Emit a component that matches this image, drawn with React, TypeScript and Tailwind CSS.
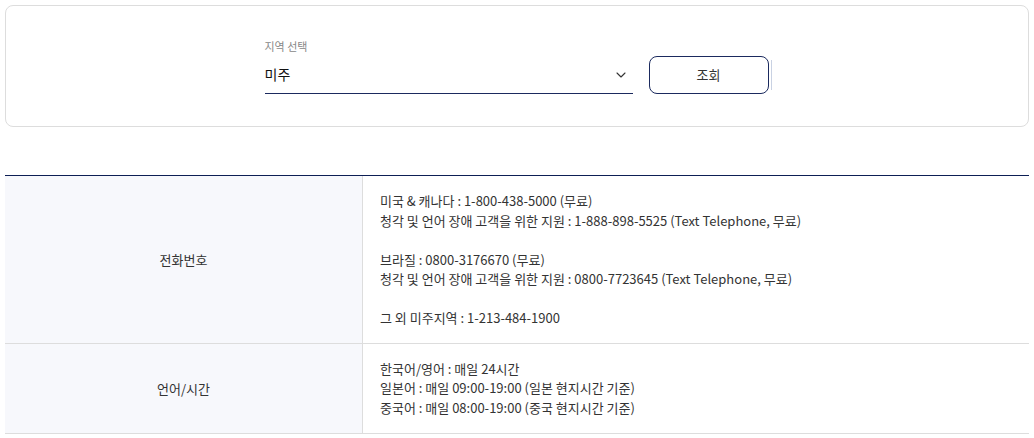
import { ChevronDown } from 'lucide-react'

const font = { fontFamily: '"Noto Sans CJK KR", "Noto Sans", sans-serif' }

export default function App() {
  return (
    <div className="bg-white w-[1034px] h-[438px] px-[5px] pt-[5px] text-[#333]" style={font}>
      <div className="h-[122px] border border-[#dddddd] rounded-[8px] flex justify-center items-start pt-[32px] pl-[2px]">
        <div className="flex items-end gap-4">
          <div className="w-[368px]">
            <div className="text-[11px] leading-[16px] text-[#888] mb-[2px]">지역 선택</div>
            <div className="h-[38px] flex items-center justify-between border-b border-[#1b2a5e] pl-0 pr-[4px]">
              <span className="text-[14px] text-[#111]">미주</span>
              <ChevronDown className="w-4 h-4 text-[#333]" strokeWidth={1.6} />
            </div>
          </div>
          <div className="flex items-center gap-[2px]">
            <button className="w-[120px] h-[38px] border border-[#1b2a5e] rounded-[8px] text-[13px] text-[#333] bg-white">
              조회
            </button>
            <div className="w-px h-[30px] bg-[#c9d2e3]" />
          </div>
        </div>
      </div>

      <div className="mt-[48px] border-t border-[#0d1f55]">
        <div className="flex border-b border-[#dddddd]">
          <div className="w-[358px] shrink-0 bg-[#f7f8fc] border-r border-[#dddddd] flex items-center justify-center text-[13px]">
            전화번호
          </div>
          <div className="flex-1 pl-[17px] py-[15px] text-[13px] leading-[19.5px]">
            <p>미국 &amp; 캐나다 : 1-800-438-5000 (무료)</p>
            <p>청각 및 언어 장애 고객을 위한 지원 : 1-888-898-5525 (Text Telephone, 무료)</p>
            <p>&nbsp;</p>
            <p>브라질 : 0800-3176670 (무료)</p>
            <p>청각 및 언어 장애 고객을 위한 지원 : 0800-7723645 (Text Telephone, 무료)</p>
            <p>&nbsp;</p>
            <p>그 외 미주지역 : 1-213-484-1900</p>
          </div>
        </div>
        <div className="flex border-b border-[#dddddd]">
          <div className="w-[358px] shrink-0 bg-[#f7f8fc] border-r border-[#dddddd] flex items-center justify-center text-[13px]">
            언어/시간
          </div>
          <div className="flex-1 pl-[17px] pt-[15px] pb-[16px] text-[13px] leading-[19.5px]">
            <p>한국어/영어 : 매일 24시간</p>
            <p>일본어 : 매일 09:00-19:00 (일본 현지시간 기준)</p>
            <p>중국어 : 매일 08:00-19:00 (중국 현지시간 기준)</p>
          </div>
        </div>
      </div>
    </div>
  )
}
